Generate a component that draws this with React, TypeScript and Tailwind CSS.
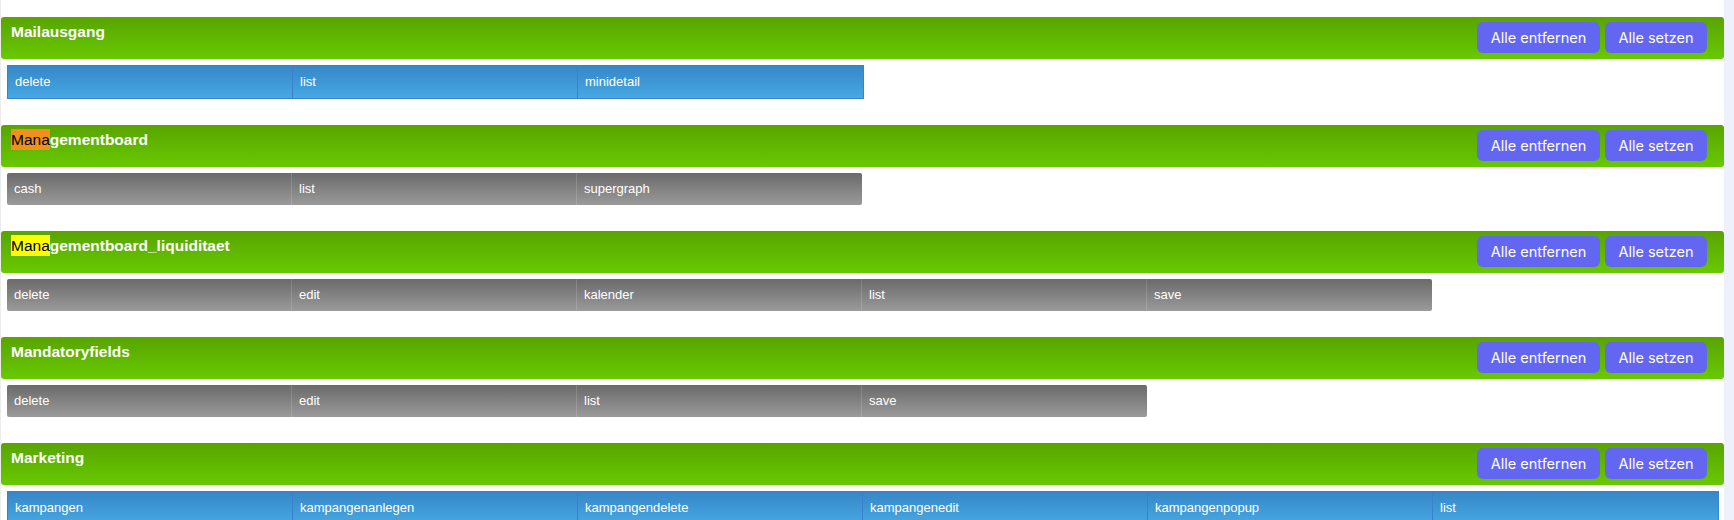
type Section = {
  name: string;
  mark?: { len: number; color: string };
  tone: "blue" | "gray";
  actions: string[];
};

const sections: Section[] = [
  { name: "Mailausgang", tone: "blue", actions: ["delete", "list", "minidetail"] },
  { name: "Managementboard", mark: { len: 4, color: "bg-[#f0911d]" }, tone: "gray", actions: ["cash", "list", "supergraph"] },
  {
    name: "Managementboard_liquiditaet",
    mark: { len: 4, color: "bg-[#ffff00]" },
    tone: "gray",
    actions: ["delete", "edit", "kalender", "list", "save"],
  },
  { name: "Mandatoryfields", tone: "gray", actions: ["delete", "edit", "list", "save"] },
  {
    name: "Marketing",
    tone: "blue",
    actions: ["kampangen", "kampangenanlegen", "kampangendelete", "kampangenedit", "kampangenpopup", "list"],
  },
];

function Title({ s }: { s: Section }) {
  if (!s.mark) return <span>{s.name}</span>;
  return (
    <span>
      <mark className={`${s.mark.color} text-black font-normal py-[2px]`}>{s.name.slice(0, s.mark.len)}</mark>
      {s.name.slice(s.mark.len)}
    </span>
  );
}

function ActionRow({ s }: { s: Section }) {
  const blue = s.tone === "blue";
  return (
    <div
      className={`flex self-start ml-[6px] mt-[6px] ${
        blue
          ? "bg-gradient-to-b from-[#3787c8] to-[#46a8e3] border border-[#3a80d0]"
          : "bg-gradient-to-b from-[#6a6a6a] to-[#9b9b9b] rounded-[2px]"
      }`}
    >
      {s.actions.map((a, i) => (
        <div
          key={a}
          className={`w-[285px] h-[32px] flex items-center px-[7px] text-[13px] text-white ${
            i < s.actions.length - 1 ? (blue ? "border-r border-[#3a80d0]" : "border-r border-white/15") : ""
          }`}
        >
          {a}
        </div>
      ))}
    </div>
  );
}

export default function App() {
  return (
    <div className="flex w-[1734px] h-[520px] overflow-hidden bg-white" style={{ fontFamily: '"Liberation Sans", Arial, sans-serif' }}>
      <div className="flex-1 flex flex-col pt-[17px] border-l border-[#ececec]">
        {sections.map((s) => (
          <div key={s.name} className="flex flex-col mb-[26px]">
            <div className="h-[42px] flex justify-between items-center pl-[10px] pr-[17px] rounded-[3px] bg-gradient-to-b from-[#58a400] to-[#68c900]">
              <h3 className="self-start pt-[4px] leading-[22px] text-[15.5px] font-bold text-white">
                <Title s={s} />
              </h3>
              <div className="flex gap-[5px] mt-[-1px]" style={{ fontFamily: "Inter, sans-serif" }}>
                <button className="w-[123px] h-[31px] rounded-[6px] bg-[#6366f1] text-white text-[14.5px]">
                  Alle entfernen
                </button>
                <button className="w-[102px] h-[31px] rounded-[6px] bg-[#6366f1] text-white text-[14.5px]">
                  Alle setzen
                </button>
              </div>
            </div>
            <ActionRow s={s} />
          </div>
        ))}
      </div>
      <div className="w-[10px] bg-[#eef0fb]" />
    </div>
  );
}
